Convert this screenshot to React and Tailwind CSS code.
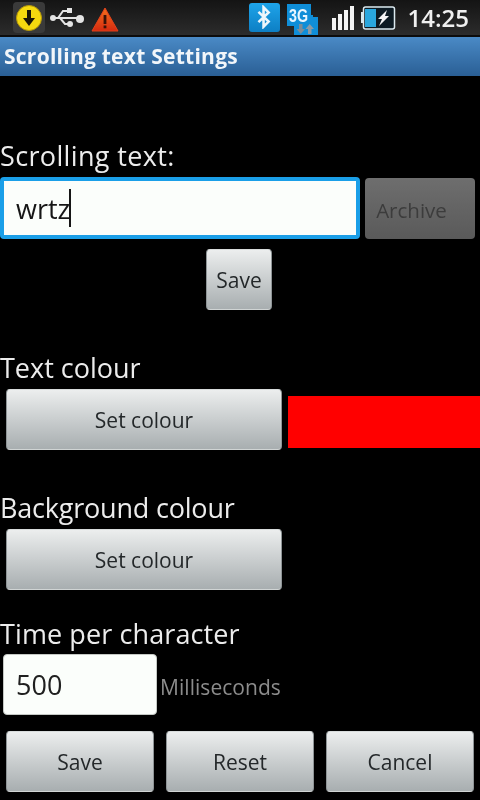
const font = { fontFamily: '"Open Sans", "Noto Sans", sans-serif' }

function DownloadIcon() {
  return (
    <div className="w-[32px] h-[31px] flex items-center justify-center bg-[#3a3a3a] rounded-sm">
      <svg width="28" height="28" viewBox="0 0 28 28">
        <circle cx="14" cy="14" r="12.5" fill="#f5d90f" stroke="#b89a08" strokeWidth="1" />
        <path d="M12 6h4v8h4l-6 8-6-8h4z" fill="#1a1608" />
      </svg>
    </div>
  )
}

function UsbIcon() {
  return (
    <svg width="36" height="24" viewBox="0 0 36 24" fill="none">
      <path d="M2 12h26M9 12l5-7h6M11 12l5 6h4" stroke="#e4e4e4" strokeWidth="2" />
      <circle cx="4" cy="12" r="3" fill="#e4e4e4" />
      <circle cx="31" cy="13" r="4" fill="#e4e4e4" />
      <rect x="18" y="2" width="5" height="5" fill="#e4e4e4" />
      <circle cx="21" cy="18" r="3" fill="#e4e4e4" />
    </svg>
  )
}

function WarningIcon() {
  return (
    <svg width="28" height="25" viewBox="0 0 28 25">
      <defs>
        <linearGradient id="warn" x1="0" y1="0" x2="0" y2="1">
          <stop offset="0" stopColor="#f4701c" />
          <stop offset="1" stopColor="#d42a10" />
        </linearGradient>
      </defs>
      <path d="M14 1 27 24H1z" fill="url(#warn)" stroke="#e2401a" strokeLinejoin="round" />
      <rect x="12.600" y="8" width="2.800" height="9" fill="#3a1208" />
      <rect x="12.600" y="18.500" width="2.800" height="2.800" fill="#3a1208" />
    </svg>
  )
}

function BluetoothIcon() {
  return (
    <div className="w-[31px] h-[29px] rounded-[3px] bg-gradient-to-b from-[#1ea4ea] to-[#0d7fc4] flex items-center justify-center">
      <svg width="18" height="24" viewBox="0 0 18 26" fill="none">
        <path d="M3 7.500 14 18l-5.500 5.500v-21L14 8 3 18.500" stroke="#eef6fb" strokeWidth="2.800" />
      </svg>
    </div>
  )
}

function NetworkIcon() {
  return (
    <svg width="32" height="31" viewBox="0 0 32 31">
      <path d="M0 0h24v11h2v2h5v18H7v-9H0z" fill="#0f8ed8" />
      <text x="2" y="18" fontSize="18" fontWeight="700" fill="#e8f6ff" textLength="19" lengthAdjust="spacingAndGlyphs" style={{ fontFamily: '"Liberation Sans", sans-serif' }}>3G</text>
      <path d="M12 20h3.500v5H18l-4.200 5-4.300-5H12z" fill="#7c8c98" />
      <path d="M21 30v-5h-2.500l4.200-5 4.300 5H24.500v5z" fill="#8a9aa6" />
    </svg>
  )
}

function SignalIcon() {
  return (
    <div className="flex items-end gap-[2px] h-[25px]">
      <div className="w-[4px] h-[12px] bg-[#f4f4f4]" />
      <div className="w-[4px] h-[16px] bg-[#f4f4f4]" />
      <div className="w-[4px] h-[20px] bg-[#f4f4f4]" />
      <div className="w-[4px] h-[24px] bg-[#f4f4f4]" />
    </div>
  )
}

function BatteryIcon() {
  return (
    <svg width="35" height="24" viewBox="0 0 35 24">
      <rect x="0" y="6" width="3" height="11" fill="#d8e8ee" />
      <rect x="2.500" y="1" width="31" height="22" rx="2" fill="#0d1a22" stroke="#dceaf0" strokeWidth="1.500" />
      <rect x="4" y="3" width="11" height="18" fill="#29a7de" />
      <path d="M26 4 17 13h4l-3 7 10-10h-4z" fill="#f4f4f4" />
    </svg>
  )
}

function StatusBar() {
  return (
    <div className="h-[35px] bg-gradient-to-b from-[#141414] to-[#2c2c2c] flex items-center overflow-hidden">
      <div className="flex items-center pl-[13px]">
        <DownloadIcon />
        <div className="ml-[4px]"><UsbIcon /></div>
        <div className="ml-[6px] mt-[3px]"><WarningIcon /></div>
      </div>
      <div className="ml-auto flex items-center pr-[11px]">
        <div className="mb-[1px]"><BluetoothIcon /></div>
        <div className="ml-[7px] mt-[3px]"><NetworkIcon /></div>
        <div className="ml-[13px]"><SignalIcon /></div>
        <div className="ml-[7px]"><BatteryIcon /></div>
        <span className="ml-[12px] text-[24px] leading-none font-semibold text-[#f0f0f0]">14:25</span>
      </div>
    </div>
  )
}

function TitleBar() {
  return (
    <div className="h-[41px] border-t-[2px] border-[#0c0c0c] bg-gradient-to-b from-[#4a8ac6] to-[#2a5f95] flex items-center pl-[4px]">
      <span className="text-[21px] font-bold leading-none mb-[1px] text-[#f2f6fa] tracking-[0.25px]">Scrolling text Settings</span>
    </div>
  )
}

function Button({ className, children }) {
  return (
    <button className={`h-[61px] shrink-0 pt-[3px] rounded-[4px] border border-[#8e9496] border-t-[#d8dcdc] border-b-[#d0d4d4] bg-gradient-to-b from-[#eceeee] to-[#a8aeb0] text-[21px] text-[#24282a] flex items-center justify-center ${className}`}>
      {children}
    </button>
  )
}

function Label({ className, children }) {
  return <div className={`text-[27px] leading-[32px] text-[#ececec] ${className}`}>{children}</div>
}

export default function App() {
  return (
    <div className="w-[480px] h-[800px] bg-black overflow-hidden blur-[0.5px]" style={font}>
      <StatusBar />
      <TitleBar />

      <Label className="mt-[64px] tracking-[0.35px]">Scrolling text:</Label>
      <div className="flex items-start mt-[5px]">
        <div className="w-[360px] h-[62px] rounded-[4px] border-[4px] border-[#1a9fe8] bg-[#fbfefb] flex items-center pl-[12px] pt-[2px] text-[27px] text-[#161616]">
          <span>wrtz</span>
          <span className="w-[2px] h-[38px] bg-[#161616] -ml-[1px] -mt-[2px]" />
        </div>
        <div className="ml-[5px] mt-[1px] w-[110px] h-[61px] rounded-[4px] bg-gradient-to-b from-[#6e6e6e] to-[#5a5a5a] text-[20.500px] text-[#3c3c3c] flex items-center justify-center pr-[17px] pt-[3px]">
          Archive
        </div>
      </div>
      <div className="flex justify-center mt-[10px]">
        <Button className="w-[66px] ml-[-2px]">Save</Button>
      </div>

      <Label className="mt-[42px]">Text colour</Label>
      <div className="flex items-start mt-[5px] pl-[6px]">
        <Button className="w-[276px]">Set colour</Button>
        <div className="ml-[6px] mt-[7px] w-[192px] h-[52px] bg-[#ff0000]" />
      </div>

      <Label className="mt-[42px] tracking-[-0.2px]">Background colour</Label>
      <div className="mt-[5px] pl-[6px]">
        <Button className="w-[276px]">Set colour</Button>
      </div>

      <Label className="mt-[28px] tracking-[0.1px]">Time per character</Label>
      <div className="flex items-center mt-[4px] pl-[3px]">
        <div className="w-[154px] h-[61px] rounded-[4px] border border-[#c4c8c4] bg-[#fbfefb] flex items-center pl-[12px] pt-[2px] text-[27px] text-[#202020]">
          500
        </div>
        <span className="ml-[3px] mt-[6px] text-[21px] tracking-[0.05px] text-[#8c8c8c]">Milliseconds</span>
      </div>

      <div className="flex gap-[12px] mt-[16px] pl-[6px]">
        <Button className="w-[148px]">Save</Button>
        <Button className="w-[148px]">Reset</Button>
        <Button className="w-[148px]">Cancel</Button>
      </div>
    </div>
  )
}
